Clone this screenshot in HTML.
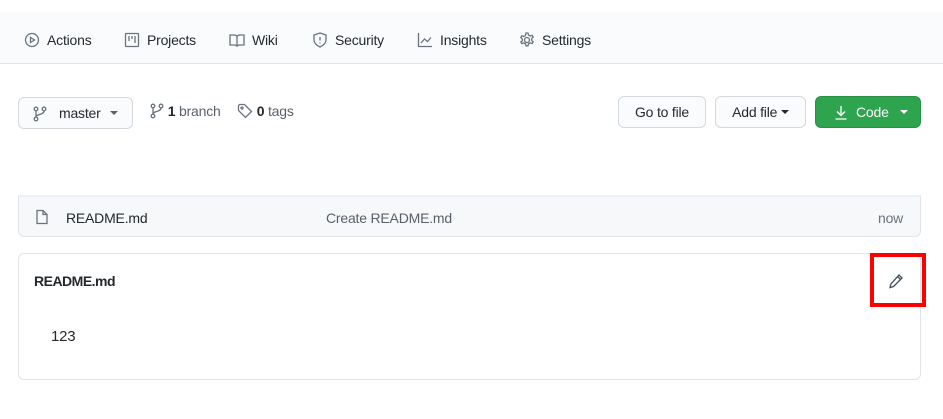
<!DOCTYPE html>
<html><head><meta charset="utf-8"><style>
*{box-sizing:border-box;margin:0;padding:0}
body{width:943px;height:419px;background:#fff;font-family:"Liberation Sans",sans-serif;font-size:14px;color:#24292e;position:relative;overflow:hidden;letter-spacing:-0.2px}
.abs{position:absolute}
.nav{left:0;top:12px;width:943px;height:52px;background:#fafbfc;border-bottom:1px solid #e1e4e8}
.ni{position:absolute;top:20px;font-size:14px;color:#24292e;line-height:16px}
.ni svg{position:absolute;left:-23px;top:0}
.btn{position:absolute;border:1px solid #d5d8dc;border-radius:6px;background:#fafbfc;height:32px;line-height:30px;font-size:14px;color:#24292e;text-align:center}
svg{fill:none;stroke:#6a737d;stroke-width:1.3}
.car{display:inline-block;width:0;height:0;border-left:4px solid transparent;border-right:4px solid transparent;border-top:4px solid currentColor;vertical-align:3px}
</style></head><body>
<div class="abs nav">
<div class="ni" style="left:47px"><svg width="16" height="16" viewBox="0 0 16 16"><circle cx="8" cy="8" r="6.5"/><path d="M6.5 5.5v5l4-2.5z"/></svg>Actions</div>
<div class="ni" style="left:147px"><svg width="16" height="16" viewBox="0 0 16 16"><rect x="1.5" y="1.5" width="13" height="13" rx="1"/><path d="M5 4v5M8 4v3M11 4v7"/></svg>Projects</div>
<div class="ni" style="left:252px"><svg width="16" height="16" viewBox="0 0 16 16"><path d="M1 3h5l2 1 2-1h5v10h-5l-2 1-2-1H1zM8 4v10"/></svg>Wiki</div>
<div class="ni" style="left:335px"><svg width="16" height="16" viewBox="0 0 16 16"><path d="M8 1l6 2v5c0 3-3 5.5-6 7-3-1.5-6-4-6-7V3z M8 5v3.5M8 10.5v1"/></svg>Security</div>
<div class="ni" style="left:440px"><svg width="16" height="16" viewBox="0 0 16 16"><path d="M1.5 1v13.5H15M4 11l3.5-4 3 2.5L14 5.5"/></svg>Insights</div>
<div class="ni" style="left:542px"><svg width="16" height="16" viewBox="0 0 16 16"><circle cx="8" cy="8" r="2.5"/><path d="M7 1h2l.5 2 1.7 1 2-.7 1 1.7-1.5 1.5v1.9l1.5 1.5-1 1.7-2-.7-1.7 1-.5 2H7l-.5-2-1.7-1-2 .7-1-1.7L3.3 9V7L1.8 5.5l1-1.7 2 .7 1.7-1z"/></svg>Settings</div>
</div>

<div class="btn" style="left:18px;top:97px;width:115px;text-align:left;padding-left:40px">master <span class="car" style="margin-left:6px;color:#586069"></span>
<svg class="abs" style="left:14px;top:8px" width="14" height="16" viewBox="0 0 14 16"><circle cx="3" cy="3" r="1.8"/><circle cx="3" cy="13" r="1.8"/><circle cx="11" cy="3" r="1.8"/><path d="M3 5v6M11 5c0 4-8 3-8 6"/></svg></div>
<div class="abs" style="left:150px;top:103px;font-size:14px;color:#586069"><svg style="vertical-align:-3px" width="14" height="16" viewBox="0 0 14 16"><circle cx="3" cy="3" r="1.8"/><circle cx="3" cy="13" r="1.8"/><circle cx="11" cy="3" r="1.8"/><path d="M3 5v6M11 5c0 4-8 3-8 6"/></svg> <b style="color:#24292e">1</b> branch</div>
<div class="abs" style="left:237px;top:103px;font-size:14px;color:#586069"><svg style="vertical-align:-3px" width="16" height="16" viewBox="0 0 16 16"><path d="M1.5 2.5v5l7 7 6-6-7-7h-5z"/><circle cx="5" cy="5" r="1"/></svg> <b style="color:#24292e">0</b> tags</div>

<div class="btn" style="left:618px;top:96px;width:88px">Go to file</div>
<div class="btn" style="left:715px;top:96px;width:91px">Add file <span class="car"></span></div>
<div class="btn" style="left:815px;top:96px;width:106px;background:#2ea44f;border-color:#2a9147;color:#fff;text-align:left;padding-left:40px">Code <span class="car" style="margin-left:8px"></span>
<svg class="abs" style="left:18px;top:8px;stroke:#fff" width="14" height="16" viewBox="0 0 14 16"><path d="M7 1v9M3 6.5l4 4 4-4M1.5 14h11"/></svg></div>

<div class="abs" style="left:18px;top:195px;width:903px;height:42px;background:#f6f8fa;border:1px solid #e1e4e8;border-top:2px solid #e8f0fb;border-radius:0 0 6px 6px"></div>
<svg class="abs" style="left:35px;top:209px" width="14" height="16" viewBox="0 0 14 16"><path d="M2 1.5h6l4 4v9H2z M8 1.5v4h4"/></svg>
<div class="abs" style="left:66px;top:210px;color:#24292e">README.md</div>
<div class="abs" style="left:326px;top:210px;color:#586069">Create README.md</div>
<div class="abs" style="left:878px;top:210px;color:#6a737d">now</div>

<div class="abs" style="left:18px;top:253px;width:903px;height:127px;border:1px solid #e1e4e8;border-radius:6px"></div>
<div class="abs" style="left:34px;top:273px;font-weight:bold;font-size:14px;letter-spacing:-0.5px">README.md</div>
<div class="abs" style="left:51px;top:328px;font-size:15px">123</div>
<svg class="abs" style="left:888px;top:273px;stroke:#444d56" width="16" height="16" viewBox="0 0 16 16"><path d="M11 2l3 3-8.5 8.5L2 14.5l1-3.5z M9.5 3.5l3 3"/></svg>
<div class="abs" style="left:870px;top:253px;width:56px;height:54px;border:4px solid #f00"></div>
</body></html>
